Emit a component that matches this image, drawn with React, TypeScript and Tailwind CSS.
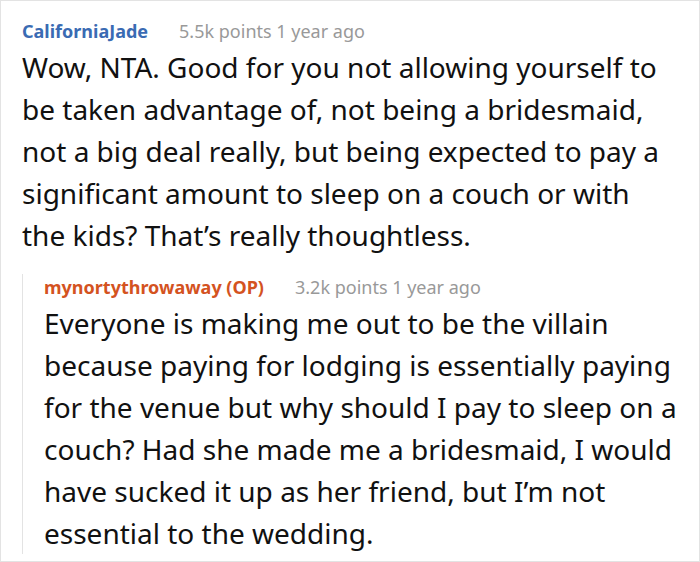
import React from "react";

export default function App() {
  return (
    <div
      className="w-[700px] h-[562px] bg-white border border-[#e3e3e3] overflow-hidden"
      style={{ fontFamily: '"Noto Sans", "Open Sans", sans-serif' }}
    >
      <div className="pl-[21px] pr-[22px] pt-[17px]">
        <div className="flex items-baseline gap-[31px] text-[18px] leading-[26px]">
          <span className="font-bold text-[#3a6bb3]">CaliforniaJade</span>
          <span className="text-[#999999]">5.5k points 1 year ago</span>
        </div>
        <p className="text-[28px] leading-[42px] text-[#111111] mt-[2px]">
          Wow, NTA. Good for you not allowing yourself to be taken advantage of, not being a bridesmaid, not a big deal really, but being expected to pay a significant amount to sleep on a couch or with the kids? That’s really thoughtless.
        </p>
        <div className="mt-[29px] border-l border-[#e3e3e3] pl-[21px]">
          <div className="flex items-baseline gap-[31px] text-[18px] leading-[26px] -mt-[11px]">
            <span className="font-bold text-[#d4531f]">mynortythrowaway (OP)</span>
            <span className="text-[#999999]">3.2k points 1 year ago</span>
          </div>
          <p className="text-[28px] leading-[42px] text-[#111111] mt-[2px] -mb-[10px]">
            Everyone is making me out to be the villain because paying for lodging is essentially paying for the venue but why should I pay to sleep on a couch? Had she made me a bridesmaid, I would have sucked it up as her friend, but I’m not essential to the wedding.
          </p>
        </div>
      </div>
    </div>
  );
}
